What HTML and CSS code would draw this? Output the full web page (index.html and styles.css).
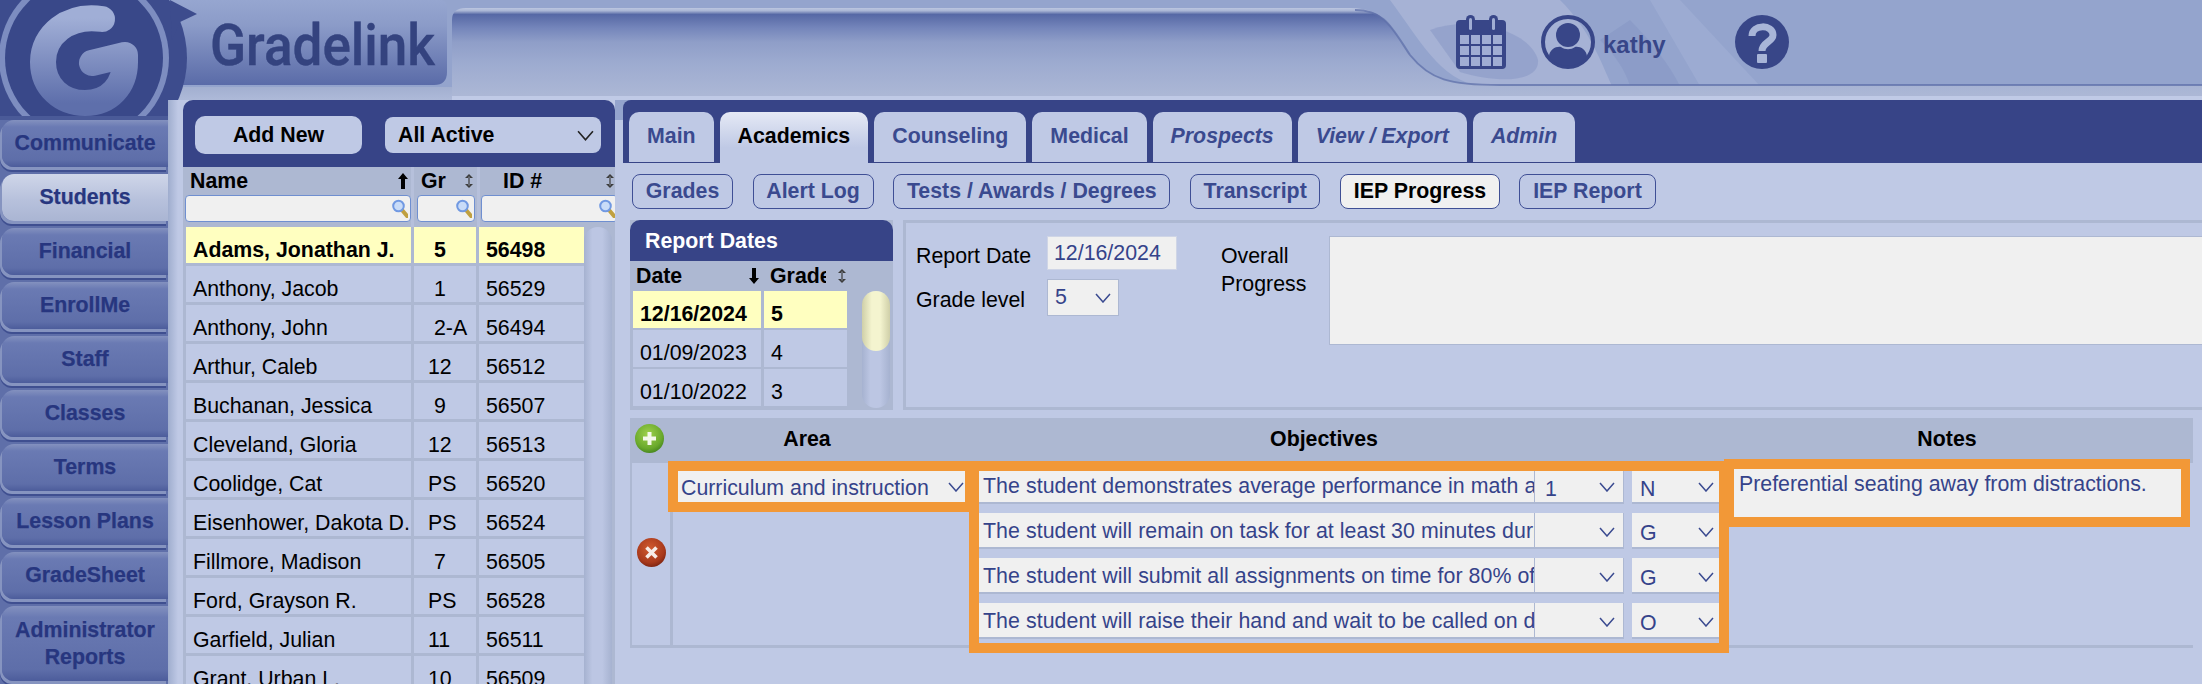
FILE: index.html
```html
<!DOCTYPE html>
<html lang="en">
<head>
<meta charset="utf-8">
<title>Gradelink</title>
<link rel="stylesheet" href="styles.css">
</head>
<body>
<svg class="sprite" width="0" height="0" aria-hidden="true">
  <symbol id="chev" viewBox="0 0 16 10"><path d="M1 1L8 9L15 1" fill="none" stroke="currentColor" stroke-width="1.5"/></symbol>
  <symbol id="mag" viewBox="0 0 16 19"><path d="M10 11L15 17" stroke="#c0a040" stroke-width="4" stroke-linecap="round"/><circle cx="6.5" cy="7" r="5.3" fill="#c9dcf8" stroke="#7199e2" stroke-width="2"/></symbol>
  <symbol id="updown" viewBox="0 0 10 16"><path d="M5 1L9 5H6V11H9L5 15L1 11H4V5H1Z" fill="#3c3c3c"/><path d="M5 3.5V12.5" stroke="#adb8d2" stroke-width="0.8"/></symbol>
  <symbol id="up" viewBox="0 0 10 16"><path d="M5 0L10 6H7V16H3V6H0Z" fill="#000"/></symbol>
  <symbol id="down" viewBox="0 0 10 16"><path d="M5 16L10 10H7V0H3V10H0Z" fill="#000"/></symbol>
</svg>
<div class="page">
  <svg class="art" width="2202" height="120" viewBox="0 0 2202 120" aria-hidden="true">
    <defs>
      <linearGradient id="panelGrad" x1="0" y1="0" x2="0" y2="1"><stop offset="0" stop-color="#96a6d0"/><stop offset="0.3" stop-color="#8b9bc8"/><stop offset="1" stop-color="#5a6ba8"/></linearGradient>
      <linearGradient id="insetGrad" x1="0" y1="0" x2="0" y2="1"><stop offset="0" stop-color="#bcc6e0"/><stop offset="0.03" stop-color="#aab6d5"/><stop offset="0.07" stop-color="#5668a5"/><stop offset="0.22" stop-color="#7586bb"/><stop offset="0.37" stop-color="#8f9ec8"/><stop offset="0.6" stop-color="#9dabd0"/><stop offset="1" stop-color="#aeb9d6"/></linearGradient>
      <linearGradient id="gGrad" x1="0" y1="0" x2="0" y2="1"><stop offset="0" stop-color="#a0aed6"/><stop offset="1" stop-color="#5e6fab"/></linearGradient>
      <linearGradient id="bandGrad" x1="0" y1="0" x2="0" y2="1"><stop offset="0" stop-color="#a2afd0"/><stop offset="1" stop-color="#c0cae6"/></linearGradient>
    </defs>
    <rect width="2202" height="120" fill="#94a4cd"/>
    <path d="M1390 0H1560C1590 30 1600 60 1612 86H1480C1440 80 1420 40 1390 0Z" fill="#a6b2d5"/>
    <path d="M1430 30C1470 15 1530 30 1538 60C1540 82 1500 84 1460 72Z" fill="#8a9ac6" opacity=".6"/>
    <path d="M1650 0L1700 86H1760L1680 0Z" fill="#a0aed4" opacity=".7"/>
    <path d="M1600 40C1615 55 1625 70 1630 86H1680C1670 65 1650 40 1630 20Z" fill="#7f8fbf" opacity=".35"/>
    <path d="M452 100V20Q452 8 466 8H1350C1385 8 1392 28 1410 55C1430 80 1450 85 1500 85H2202V100Z" fill="url(#insetGrad)"/>
    <path d="M1355 10C1385 10 1392 28 1410 55C1430 80 1450 85 1500 85H2202" fill="none" stroke="#5f70a9" stroke-width="2" opacity=".75"/>
    <path d="M0 0H440Q447 0 447 8V72Q447 85 434 85H0Z" fill="url(#panelGrad)"/>
    <rect x="0" y="96" width="2202" height="4" fill="#c0cae6"/>
    <path d="M168 120V102Q168 87 184 87H452V100H168Z" fill="url(#bandGrad)"/>
    <circle cx="84" cy="58" r="103" fill="#3d4c8d"/>
    <path d="M170 0L197 14L180 22L172 40Z" fill="#3d4c8d"/>
    <circle cx="84" cy="58" r="85" fill="#7d8dc0"/>
    <circle cx="84" cy="58" r="79" fill="#394889"/>
    <path d="M102 19C68 14 43 35 43 62C43 87 62 103 85 103C110 103 125 85 125 62L125 55L92 63" fill="none" stroke="url(#gGrad)" stroke-width="26" stroke-linecap="round" stroke-linejoin="round"/>
    <rect x="0" y="116" width="168" height="4" fill="#4a5a98"/>
    <text class="brand" x="210" y="65" textLength="225" lengthAdjust="spacingAndGlyphs">Gradelink</text>
  </svg>

  <header class="topbar">
    <svg class="icon-cal" width="50" height="54" viewBox="0 0 50 54" aria-hidden="true">
      <rect x="0" y="5" width="50" height="49" rx="4" fill="#384688"/>
      <rect x="10" y="0" width="9" height="16" rx="4.5" fill="#384688"/>
      <rect x="33" y="0" width="9" height="16" rx="4.5" fill="#384688"/>
      <rect x="13" y="3" width="3" height="12" rx="1.5" fill="#a0add4"/>
      <rect x="36" y="3" width="3" height="12" rx="1.5" fill="#a0add4"/>
      <g fill="#a0add4">
        <rect x="4" y="20" width="9" height="9"/><rect x="15" y="20" width="9" height="9"/><rect x="26" y="20" width="9" height="9"/><rect x="37" y="20" width="9" height="9"/>
        <rect x="4" y="31" width="9" height="9"/><rect x="15" y="31" width="9" height="9"/><rect x="26" y="31" width="9" height="9"/><rect x="37" y="31" width="9" height="9"/>
        <rect x="4" y="42" width="9" height="9"/><rect x="15" y="42" width="9" height="9"/><rect x="26" y="42" width="9" height="9"/><rect x="37" y="42" width="9" height="9"/>
      </g>
    </svg>
    <svg class="icon-user" width="54" height="54" viewBox="0 0 54 54" aria-hidden="true">
      <defs><clipPath id="userClip"><circle cx="27" cy="27" r="24"/></clipPath></defs>
      <circle cx="27" cy="27" r="25" fill="none" stroke="#384688" stroke-width="4"/>
      <circle cx="27" cy="20" r="12" fill="#384688"/>
      <path d="M8 54V42C8 34 16 31 20 32C24 35 30 35 34 32C38 31 46 34 46 42V54Z" fill="#384688" clip-path="url(#userClip)"/>
    </svg>
    <span class="username">kathy</span>
    <svg class="icon-help" width="54" height="54" viewBox="0 0 54 54" aria-hidden="true">
      <circle cx="27" cy="27" r="27" fill="#384688"/>
      <path d="M17 21C17 9 38 9 38 20C38 27 27 27 27 36" fill="none" stroke="#a8b5d8" stroke-width="7"/>
      <rect x="22" y="39" width="10" height="9" rx="1" fill="#a8b5d8"/>
    </svg>
  </header>

  <div class="content">
    <nav class="sidenav">
      <a class="navbtn">Communicate</a>
      <a class="navbtn navbtn-active">Students</a>
      <a class="navbtn">Financial</a>
      <a class="navbtn">EnrollMe</a>
      <a class="navbtn">Staff</a>
      <a class="navbtn">Classes</a>
      <a class="navbtn">Terms</a>
      <a class="navbtn">Lesson Plans</a>
      <a class="navbtn">GradeSheet</a>
      <a class="navbtn navbtn-tall">Administrator<br>Reports</a>
    </nav>

    <section class="student-panel">
      <div class="student-top">
        <button class="addnew">Add New</button>
        <div class="allactive">All Active<svg class="chev-lg"><use href="#chev"/></svg></div>
      </div>
      <div class="student-head">
        <div class="hcell">
          <div class="htitle">Name<svg class="sort"><use href="#up"/></svg></div>
          <div class="filter"><svg class="mag"><use href="#mag"/></svg></div>
        </div>
        <div class="hcell hcell-gr">
          <div class="htitle">Gr<svg class="sort"><use href="#updown"/></svg></div>
          <div class="filter"><svg class="mag"><use href="#mag"/></svg></div>
        </div>
        <div class="hcell hcell-id">
          <div class="htitle">ID #<svg class="sort"><use href="#updown"/></svg></div>
          <div class="filter"><svg class="mag"><use href="#mag"/></svg></div>
        </div>
      </div>
      <div class="student-body">
        <div class="student-rows">
          <div class="srow srow-sel"><span>Adams, Jonathan J.</span><span>&nbsp;5</span><span>56498</span></div>
          <div class="srow"><span>Anthony, Jacob</span><span>&nbsp;1</span><span>56529</span></div>
          <div class="srow"><span>Anthony, John</span><span>&nbsp;2-A</span><span>56494</span></div>
          <div class="srow"><span>Arthur, Caleb</span><span>12</span><span>56512</span></div>
          <div class="srow"><span>Buchanan, Jessica</span><span>&nbsp;9</span><span>56507</span></div>
          <div class="srow"><span>Cleveland, Gloria</span><span>12</span><span>56513</span></div>
          <div class="srow"><span>Coolidge, Cat</span><span>PS</span><span>56520</span></div>
          <div class="srow"><span>Eisenhower, Dakota D.</span><span>PS</span><span>56524</span></div>
          <div class="srow"><span>Fillmore, Madison</span><span>&nbsp;7</span><span>56505</span></div>
          <div class="srow"><span>Ford, Grayson R.</span><span>PS</span><span>56528</span></div>
          <div class="srow"><span>Garfield, Julian</span><span>11</span><span>56511</span></div>
          <div class="srow"><span>Grant, Urban L.</span><span>10</span><span>56509</span></div>
        </div>
        <div class="student-scroll"></div>
      </div>
    </section>

    <main class="main">
      <div class="tabbar">
        <a class="tab">Main</a>
        <a class="tab tab-active">Academics</a>
        <a class="tab">Counseling</a>
        <a class="tab">Medical</a>
        <a class="tab tab-it">Prospects</a>
        <a class="tab tab-it">View / Export</a>
        <a class="tab tab-it">Admin</a>
      </div>
      <div class="subtabs">
        <a class="subtab">Grades</a>
        <a class="subtab">Alert Log</a>
        <a class="subtab">Tests / Awards / Degrees</a>
        <a class="subtab">Transcript</a>
        <a class="subtab subtab-active">IEP Progress</a>
        <a class="subtab">IEP Report</a>
      </div>

      <div class="report-row">
        <div class="dates">
          <div class="dates-title">Report Dates</div>
          <div class="dates-head">
            <div class="dh dh-date">Date<svg class="sort"><use href="#down"/></svg></div>
            <div class="dh dh-grade"><span class="dh-clip">Grade</span><svg class="sort"><use href="#updown"/></svg></div>
          </div>
          <div class="dates-body">
            <div class="dates-rows">
              <div class="drow drow-sel"><span>12/16/2024</span><span>5</span></div>
              <div class="drow"><span>01/09/2023</span><span>4</span></div>
              <div class="drow"><span>01/10/2022</span><span>3</span></div>
            </div>
            <div class="dates-scroll"><div class="dates-thumb"></div></div>
          </div>
        </div>

        <div class="form-panel">
          <div class="form-fields">
            <div class="field">
              <label class="flabel">Report Date</label>
              <div class="finput">12/16/2024</div>
            </div>
            <div class="field field-grade">
              <label class="flabel">Grade level</label>
              <div class="fselect">5<svg class="chev"><use href="#chev"/></svg></div>
            </div>
          </div>
          <div class="overall">Overall<br>Progress</div>
          <div class="overall-box"></div>
        </div>
      </div>

      <div class="iep">
        <div class="iep-head">
          <div class="iep-add">
            <svg width="29" height="29" viewBox="0 0 29 29" aria-hidden="true">
              <defs><radialGradient id="addGrad" cx="0.45" cy="0.35" r="0.7"><stop offset="0" stop-color="#9fd24c"/><stop offset="0.7" stop-color="#6aa92c"/><stop offset="1" stop-color="#3f7f1c"/></radialGradient></defs>
              <circle cx="14.5" cy="14.5" r="14.5" fill="url(#addGrad)"/>
              <path d="M14.5 8V21M8 14.5H21" stroke="#f4f8ea" stroke-width="4"/>
            </svg>
          </div>
          <div class="iep-h">Area</div>
          <div class="iep-h">Objectives</div>
          <div class="iep-h iep-h-notes">Notes</div>
        </div>
        <div class="iep-body">
          <div class="iep-del">
            <svg width="29" height="29" viewBox="0 0 29 29" aria-hidden="true">
              <defs><radialGradient id="delGrad" cx="0.45" cy="0.35" r="0.7"><stop offset="0" stop-color="#d05a30"/><stop offset="0.7" stop-color="#a93a1c"/><stop offset="1" stop-color="#752010"/></radialGradient></defs>
              <circle cx="14.5" cy="14.5" r="14.5" fill="url(#delGrad)"/>
              <path d="M9.5 9.5L19.5 19.5M19.5 9.5L9.5 19.5" stroke="#f6ece8" stroke-width="3.6"/>
            </svg>
          </div>
          <div class="hl hl-area">
            <div class="area-select">Curriculum and instruction<svg class="chev"><use href="#chev"/></svg></div>
          </div>
          <div class="hl hl-obj">
            <div class="obj-row obj-row-first">
              <div class="obj-text">The student demonstrates average performance in math and reading</div>
              <div class="obj-sel obj-sel-a">1<svg class="chev"><use href="#chev"/></svg></div>
              <div class="obj-sel obj-sel-b">N<svg class="chev"><use href="#chev"/></svg></div>
            </div>
            <div class="obj-row">
              <div class="obj-text">The student will remain on task for at least 30 minutes during class</div>
              <div class="obj-sel obj-sel-a"><svg class="chev"><use href="#chev"/></svg></div>
              <div class="obj-sel obj-sel-b">G<svg class="chev"><use href="#chev"/></svg></div>
            </div>
            <div class="obj-row">
              <div class="obj-text">The student will submit all assignments on time for 80% of the term</div>
              <div class="obj-sel obj-sel-a"><svg class="chev"><use href="#chev"/></svg></div>
              <div class="obj-sel obj-sel-b">G<svg class="chev"><use href="#chev"/></svg></div>
            </div>
            <div class="obj-row">
              <div class="obj-text">The student will raise their hand and wait to be called on during class</div>
              <div class="obj-sel obj-sel-a"><svg class="chev"><use href="#chev"/></svg></div>
              <div class="obj-sel obj-sel-b">O<svg class="chev"><use href="#chev"/></svg></div>
            </div>
          </div>
          <div class="hl hl-notes">
            <div class="notes-box">Preferential seating away from distractions.</div>
          </div>
        </div>
      </div>
    </main>
  </div>
</div>
</body>
</html>
```

FILE: styles.css
```css
* { box-sizing: border-box; }
html, body { margin: 0; padding: 0; }
body {
  width: 2202px;
  height: 684px;
  overflow: hidden;
  background: #bfc9e5;
  font-family: "Liberation Sans", Arial, sans-serif;
  font-size: 21.33px;
  color: #000;
}
.sprite { position: absolute; }
.page { position: relative; width: 2202px; height: 684px; overflow: hidden; }
.art { position: absolute; left: 0; top: 0; }
.brand {
  font-family: Roboto, "Liberation Sans", sans-serif;
  font-weight: 500;
  font-size: 58px;
  fill: #34437f;
  stroke: #34437f;
  stroke-width: .4px;
}

/* top bar */
.topbar {
  position: relative;
  height: 100px;
  display: flex;
  align-items: flex-start;
  padding: 15px 0 0 1456px;
}
.icon-user { margin-left: 35px; }
.username { margin: 16px 0 0 8px; font-weight: 700; font-size: 24px; line-height: 28px; color: #384688; }
.icon-help { margin-left: 69px; }

/* layout */
.content {
  position: relative;
  display: flex;
  height: 584px;
  overflow: hidden;
  background: linear-gradient(to bottom, transparent 20px, #5f6fa9 20px) 0 0 / 168px 100% no-repeat;
}

/* side nav */
.sidenav {
  width: 168px;
  flex: none;
  display: flex;
  flex-direction: column;
  gap: 7px;
  padding: 20px 0 0 2px;
}
.navbtn {
  height: 47px;
  display: flex;
  align-items: center;
  justify-content: center;
  text-align: center;
  font-weight: 700;
  color: #27367f;
  -webkit-text-stroke: .25px #27367f;
  border-radius: 12px 0 0 12px;
  background: linear-gradient(#8391bf, #6a7ab3 15%, #5e6ea9 85%, #4c5c9b);
  box-shadow: -2px 3px 0 #8694c0, -2px 5px 0 #3f4f90;
}
.navbtn-active { background: linear-gradient(#cfd6e9, #b7c1dc 55%, #aab5d3); }
.navbtn-tall { height: 75px; line-height: 27px; }

/* student list */
.student-panel {
  width: 447px;
  flex: none;
  padding-left: 15px;
  background: linear-gradient(to right, #9fadce, #bfc9e5 10px);
}
.student-top {
  height: 67px;
  display: flex;
  align-items: center;
  gap: 23px;
  padding: 3px 0 0 12px;
  background: #374487;
  border-radius: 10px 10px 0 0;
}
.addnew {
  width: 167px;
  height: 38px;
  border: 0;
  border-radius: 10px;
  background: #bfc9e5;
  font: 700 21.33px "Liberation Sans", Arial, sans-serif;
  color: #000;
  padding: 0;
}
.allactive {
  width: 216px;
  height: 36px;
  display: flex;
  align-items: center;
  justify-content: space-between;
  padding: 0 7px 0 13px;
  border-radius: 8px;
  background: #bfc9e5;
  font-weight: 700;
}
.chev-lg { width: 17px; height: 11px; color: #222; }
.chev { width: 16px; height: 10px; color: #3a4a90; flex: none; }

.student-head {
  height: 60px;
  display: grid;
  grid-template-columns: 228px 63px 135px;
  gap: 3px;
  background: #b6c0db;
}
.hcell { background: #adb8d2; overflow: hidden; }
.htitle {
  height: 28px;
  display: flex;
  justify-content: space-between;
  align-items: center;
  padding: 0 3px 0 7px;
  font-weight: 700;
  line-height: 28px;
}
.sort { width: 10px; height: 16px; flex: none; }
.filter {
  height: 27px;
  margin-left: 2px;
  display: flex;
  justify-content: flex-end;
  align-items: center;
  padding-right: 2px;
  background: #f0f0f0;
  border: 1.5px solid #6f8fd0;
  border-radius: 4px;
}
.mag { width: 16px; height: 19px; }
.hcell-gr .htitle { padding-left: 7px; }
.hcell-gr .filter { margin: 0 2px 0 3px; }
.hcell-id .htitle { padding: 0 0 0 23px; }
.hcell-id .filter { margin: 0 -3px 0 1px; }

.student-body { display: flex; background: #adb8d2; height: 457px; padding-left: 3px; }
.student-rows { width: 398px; flex: none; display: flex; flex-direction: column; gap: 3px; }
.srow {
  flex: none;
  height: 36px;
  display: grid;
  grid-template-columns: 225px 62px 105px;
  gap: 3px;
  line-height: 28px;
  white-space: nowrap;
  background: #adb8d2;
}
.srow span { display: block; height: 36px; padding: 9px 0 0 7px; background: #bfc9e5; }
.srow span:nth-child(2) { padding-left: 14px; }
.srow-sel { font-weight: 700; }
.srow-sel span { background: #ffffc0; }
.student-scroll {
  width: 28px;
  flex: none;
  border-radius: 14px 14px 0 0;
  background: linear-gradient(to right, #a6b2d0, #bcc6e3 30%, #bcc6e3 65%, #a6b2d0);
}

/* main */
.main { width: 1579px; flex: none; margin-left: 8px; }
.tabbar {
  height: 63px;
  display: flex;
  gap: 6px;
  padding: 12px 0 0 6px;
  background: #374487;
  border-radius: 8px 0 0 0;
}
.tab {
  height: 50px;
  padding: 0 18px;
  line-height: 49px;
  font-weight: 700;
  color: #3a4a8f;
  background: #bfc9e5;
  border-radius: 10px 10px 0 0;
  white-space: nowrap;
}
.tab-active { height: 51px; color: #000; background: linear-gradient(#e5e9f5, #bfc9e5 70%); }
.tab-it { font-style: italic; }

.subtabs { display: flex; gap: 19.5px; padding: 11px 0 0 9px; height: 45.5px; }
.subtab {
  height: 34.5px;
  padding: 0 12.75px;
  line-height: 32px;
  font-weight: 700;
  color: #3a4a8f;
  border: 1.5px solid #3f4f95;
  border-radius: 8px;
  white-space: nowrap;
}
.subtab-active { color: #000; background: #f0f0f0; }

.report-row { display: flex; height: 190px; margin-top: 11.5px; padding-left: 7px; gap: 10px; }
.dates { width: 263px; flex: none; background: #adb8d2; }
.dates-title {
  height: 41px;
  padding: 7px 0 0 15px;
  line-height: 28px;
  font-weight: 700;
  color: #fff;
  background: #374487;
  border-radius: 10px 10px 0 0;
}
.dates-head { height: 30px; display: flex; }
.dh { display: flex; align-items: center; justify-content: space-between; font-weight: 700; line-height: 30px; }
.dh-date { width: 132px; padding: 0 3px 0 6px; }
.dh-grade { width: 87px; margin-left: 2px; padding: 0 4px 0 6px; }
.dh-clip { display: block; width: 56px; overflow: hidden; }
.dates-body { display: flex; height: 119px; background: #adb8d2; }
.dates-rows { width: 217px; margin-left: 3px; display: flex; flex-direction: column; gap: 3px; flex: none; }
.drow { height: 36px; display: grid; grid-template-columns: 128px 83px; gap: 3px; line-height: 28px; }
.drow span { display: block; padding: 9px 0 0 7px; background: #bfc9e5; }
.drow-sel { font-weight: 700; }
.drow-sel span { background: #ffffc0; }
.dates-scroll {
  width: 28px;
  height: 117px;
  margin-left: 12px;
  border-radius: 14px;
  background: linear-gradient(to right, #a6b2d0, #bcc6e3 30%, #bcc6e3 65%, #a6b2d0);
  flex: none;
}
.dates-thumb {
  height: 60px;
  border-radius: 14px;
  background: linear-gradient(to right, #cfcfa8, #f4f4cf 35%, #f4f4cf 65%, #cfcfa8);
}

.form-panel {
  flex: 1;
  display: flex;
  align-items: flex-start;
  padding: 13px 0 0 10px;
  border: 3px solid #adb8d2;
  border-right: 0;
  overflow: hidden;
}
.form-fields { width: 261px; flex: none; }
.field { display: flex; height: 34px; line-height: 34px; }
.field-grade { height: 37px; margin-top: 9px; line-height: 37px; }
.flabel { width: 131px; flex: none; padding-top: 3px; }
.finput {
  width: 130px;
  padding-left: 6px;
  line-height: 32px;
  color: #35438a;
  background: #f0f0f0;
  border: 1px solid #cfd5e6;
}
.fselect {
  width: 72px;
  display: flex;
  justify-content: space-between;
  align-items: center;
  padding: 0 7px;
  color: #35438a;
  background: #f0f0f0;
  border: 1px solid #adb8d2;
}
.overall { width: 108px; flex: none; margin: 6px 0 0 44px; line-height: 28px; }
.overall-box {
  width: 900px;
  height: 109px;
  flex: none;
  background: #f0f0f0;
  border: 1px solid #adb8d2;
}

/* IEP table */
.iep { width: 1563px; margin: 8px 0 0 7px; }
.iep-head {
  height: 45px;
  display: grid;
  grid-template-columns: 42px 270px 764px 1fr;
  background: #adb8d2;
  font-weight: 700;
  text-align: center;
  line-height: 42px;
}
.iep-add { padding: 6px 0 0 5px; line-height: 0; text-align: left; }
.iep-h-notes { padding-right: 5px; }
.iep-body {
  height: 185px;
  display: flex;
  align-items: flex-start;
  border-bottom: 3px solid #adb8d2;
}
.iep-del {
  width: 43px;
  height: 182px;
  flex: none;
  display: flex;
  align-items: center;
  justify-content: center;
  padding-bottom: 4px;
  border-left: 2px solid #adb8d2;
  border-right: 3px solid #adb8d2;
}
.hl { flex: none; border: 10px solid #f29837; }
.hl-area {
  width: 301px;
  height: 51px;
  margin: -2px 0 0 -5px;
  border-right-width: 4px;
}
.area-select {
  height: 31px;
  overflow: hidden;
  display: flex;
  justify-content: space-between;
  align-items: flex-start;
  padding: 0 1px 0 3px;
  color: #35438a;
  background: #f0f0f0;
  line-height: 35px;
}
.area-select .chev { margin-top: 11px; }
.hl-obj { width: 760px; height: 192px; margin-top: -2px; }
.obj-row {
  height: 36px;
  margin-top: 9px;
  display: flex;
  color: #35438a;
}
.obj-row-first { height: 33px; margin-top: 0; }
.obj-text {
  width: 555px;
  flex: none;
  padding-left: 4px;
  overflow: hidden;
  white-space: nowrap;
  letter-spacing: .06px;
  line-height: 37px;
  background: #f0f0f0;
  border-bottom: 2px solid #adb8d2;
}
.obj-row-first .obj-text { line-height: 30px; }
.obj-sel {
  overflow: hidden;
  display: flex;
  align-items: flex-start;
  justify-content: space-between;
  flex: none;
  line-height: 40px;
  background: #f0f0f0;
  border-bottom: 2px solid #adb8d2;
}
.obj-sel .chev { margin-top: 14px; }
.obj-row-first .obj-sel { line-height: 36px; }
.obj-row-first .obj-sel .chev { margin-top: 11px; }
.obj-sel-a { width: 90px; padding: 0 8px 0 10px; border-right: 1px solid #adb8d2; border-left: 1px solid #adb8d2; justify-content: flex-end; }
.obj-sel-b { width: 87px; margin-left: 8px; padding: 0 5px 0 8px; }
.obj-row-first .obj-sel-a { justify-content: space-between; }
.hl-notes { width: 466px; height: 68px; margin: -4px 0 0 -5px; border-right-width: 9px; }
.notes-box {
  height: 48px;
  padding-left: 5px;
  line-height: 31px;
  color: #35438a;
  background: #f0f0f0;
}
```
